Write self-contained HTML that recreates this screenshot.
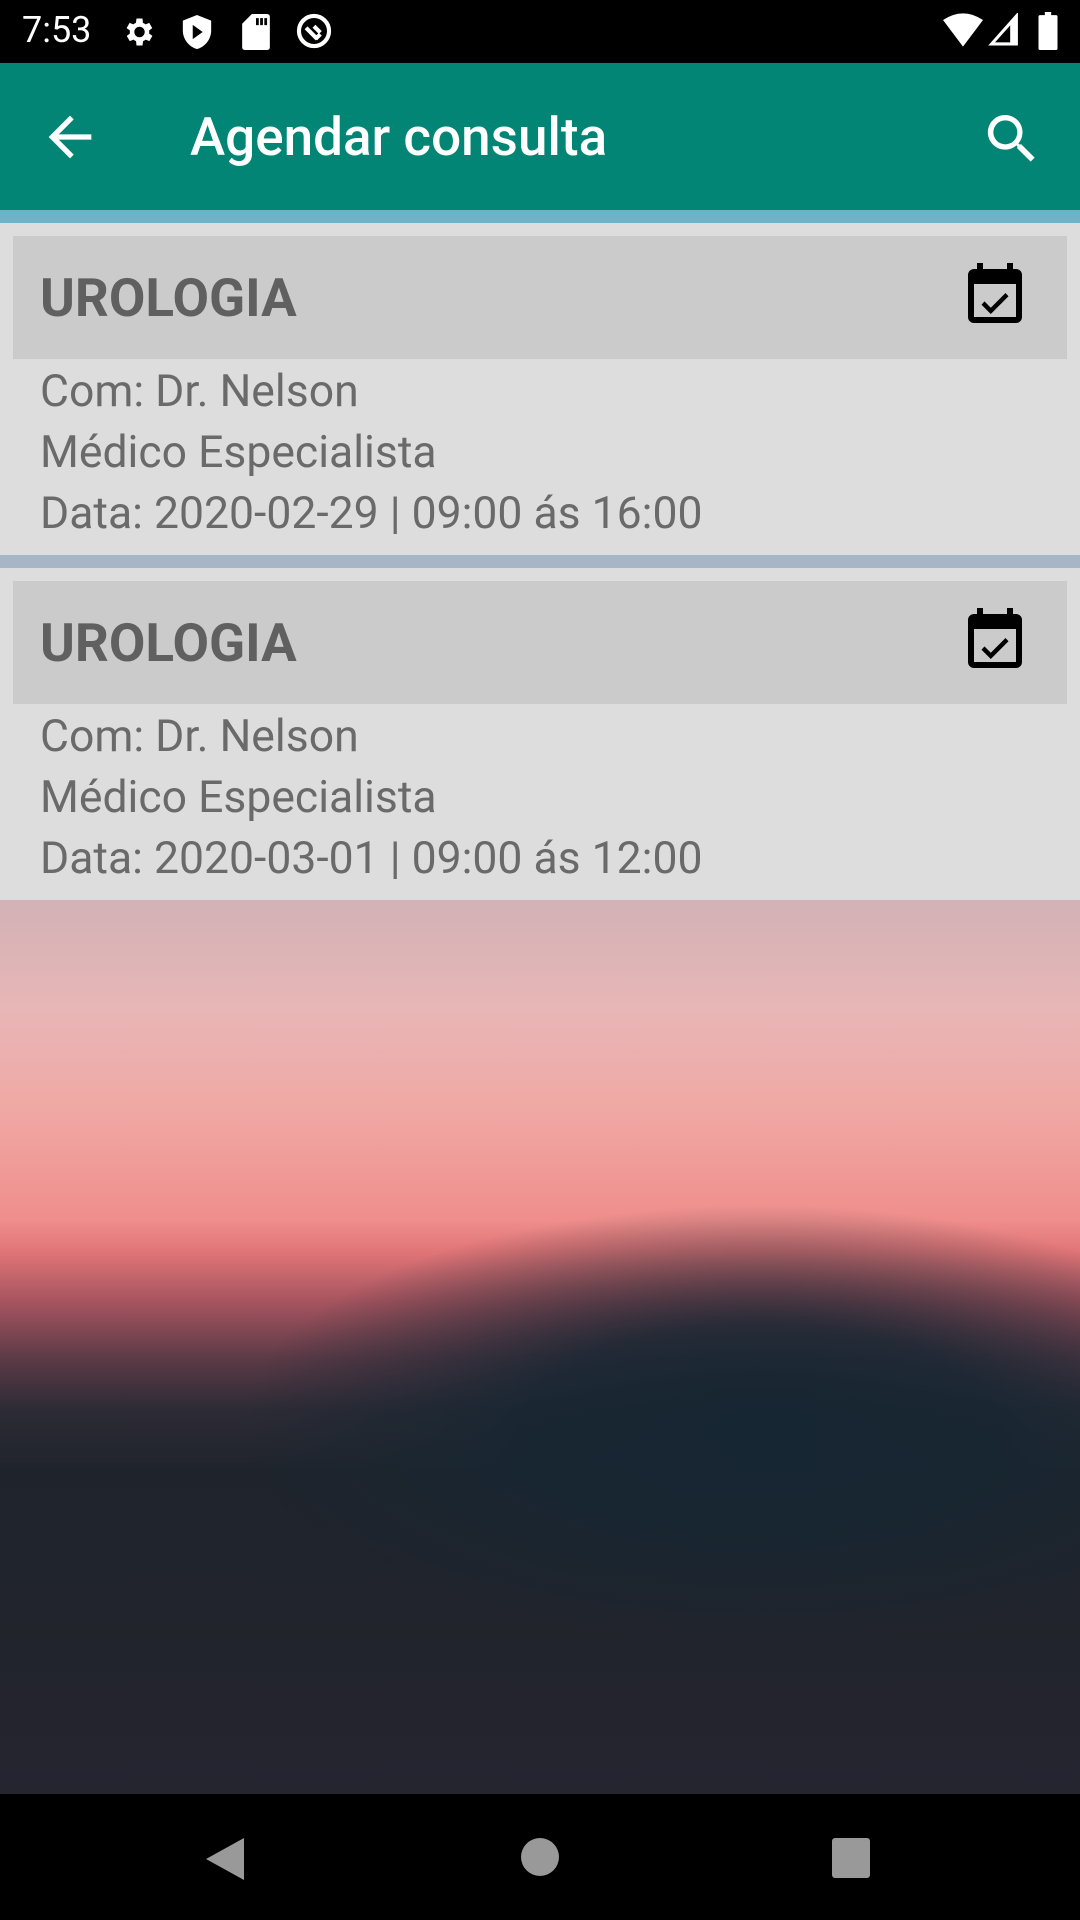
<!DOCTYPE html>
<html><head><meta charset="utf-8"><style>
*{margin:0;padding:0;box-sizing:border-box}
body{width:1080px;height:1920px;position:relative;overflow:hidden;font-family:"Roboto","Liberation Sans",sans-serif;background:#222430}
.abs{position:absolute}
#status{left:0;top:0;width:1080px;height:63px;background:#000;color:#fff}
#bar{left:0;top:63px;width:1080px;height:147px;background:#038575}
#bg{left:0;top:210px;width:1080px;height:1584px;
background:
radial-gradient(ellipse 520px 220px at 760px 1215px, rgba(22,38,50,1) 0%, rgba(22,38,50,0.85) 45%, rgba(22,38,50,0) 100%),
linear-gradient(180deg,#6cb3c8 0px,#a7b6c6 360px,#c8bfcb 560px,#d4b2b6 700px,#e8b6b6 800px,#f0a8a4 900px,#ef8e8c 1010px,#e27678 1040px,#a85560 1090px,#5a3a46 1150px,#2d2b35 1200px,#1f242c 1260px,#21242c 1400px,#252530 1584px);}
.card{left:0;width:1080px;background:#dddddd}
.hd{position:absolute;left:13px;width:1054px;height:123px;background:#cbcbcb}
.ttl{position:absolute;left:27px;top:31px;font-size:53px;font-weight:bold;color:#606060}
.ln{position:absolute;left:40px;font-size:44.5px;color:#6a6a6a;white-space:nowrap}
.cal{position:absolute;left:946px;top:24px}
#nav{left:0;top:1794px;width:1080px;height:126px;background:#000}
</style></head><body>
<div id="bg" class="abs"></div>
<div id="status" class="abs">
<div class="abs" style="left:22px;top:9px;font-size:36px;">7:53</div>
<svg class="abs" style="left:120px;top:14px" width="36" height="36" viewBox="0 0 24 24"><path fill="#fff" d="M19.4 13a7.5 7.5 0 000-2l2.1-1.6-2-3.5-2.5 1a7 7 0 00-1.7-1L15 3h-4l-.4 2.9a7 7 0 00-1.7 1l-2.5-1-2 3.5L6.6 11a7.5 7.5 0 000 2l-2.1 1.6 2 3.5 2.5-1a7 7 0 001.7 1L11 21h4l.4-2.9a7 7 0 001.7-1l2.5 1 2-3.5zM13 15.5a3.5 3.5 0 110-7 3.5 3.5 0 010 7z"/></svg>
<svg class="abs" style="left:180px;top:13px" width="34" height="38" viewBox="0 0 24 26"><path fill="#fff" d="M12 1L2 5v7c0 6 4.3 11.5 10 13 5.7-1.5 10-7 10-13V5z"/><path fill="#000" d="M9 8l7 5-7 5z"/></svg>
<svg class="abs" style="left:242px;top:14px" width="28" height="36" viewBox="0 0 20 26"><path fill="#fff" d="M7 0h11a2 2 0 012 2v22a2 2 0 01-2 2H2a2 2 0 01-2-2V7z"/><path fill="#000" d="M10 3h2v5h-2zM13 3h2v5h-2zM16 3h2v5h-2z"/></svg>
<svg class="abs" style="left:295px;top:12px" width="38" height="38" viewBox="0 0 24 24"><circle cx="12" cy="12" r="9.5" fill="none" stroke="#fff" stroke-width="2.6"/><path d="M7 10l7 7M13 17l3-3M12 9l4 4" stroke="#fff" stroke-width="2.6" fill="none"/></svg>
<svg class="abs" style="left:943px;top:13px" width="40" height="34" viewBox="0 0 24 20"><path fill="#fff" d="M0 4Q12-4 24 4L12 20z"/></svg>
<svg class="abs" style="left:988px;top:13px" width="32" height="34" viewBox="0 0 20 22"><path fill="none" stroke="#fff" stroke-width="2" d="M18 2L2 20h16z"/><path fill="#fff" d="M18 2v18H14V6z"/></svg>
<svg class="abs" style="left:1038px;top:12px" width="20" height="38" viewBox="0 0 12 24"><path fill="#fff" d="M4 0h4v2h3a1 1 0 011 1v20a1 1 0 01-1 1H1a1 1 0 01-1-1V3a1 1 0 011-1h3z"/></svg>
</div>
<div id="bar" class="abs">
<svg class="abs" style="left:38px;top:42px" width="64" height="64" viewBox="0 0 24 24"><path fill="#fff" d="M20 11H7.8l5.6-5.6L12 4l-8 8 8 8 1.4-1.4L7.8 13H20z"/></svg>
<div class="abs" style="left:190px;top:43px;font-size:53px;font-weight:500;color:#fff;">Agendar consulta</div>
<svg class="abs" style="left:980px;top:44px" width="64" height="64" viewBox="0 0 24 24"><path fill="#fff" d="M15.5 14h-.8l-.3-.3A6.5 6.5 0 109.5 16a6.5 6.5 0 004.2-1.6l.3.3v.8l5 5 1.5-1.5zm-6 0a4.5 4.5 0 110-9 4.5 4.5 0 010 9z"/></svg>
</div>

<div class="abs card" style="top:223px;height:332px">
<div class="hd" style="top:13px"><div class="ttl">UROLOGIA</div>
<svg class="cal" width="72" height="72" viewBox="0 0 24 24"><path fill="#000" d="M16.5 12.1l-1-1.1-4.9 4.9-2.1-2.1-1 1.1 3.1 3.1zM19 3h-1V1h-2v2H8V1H6v2H5a2 2 0 00-2 2v14a2 2 0 002 2h14a2 2 0 002-2V5a2 2 0 00-2-2zm0 16H5V8h14z"/></svg></div>
<div class="ln" style="top:142px">Com: Dr. Nelson</div>
<div class="ln" style="top:203px">Médico Especialista</div>
<div class="ln" style="top:264px">Data: 2020-02-29 | 09:00 ás 16:00</div>
</div>

<div class="abs card" style="top:568px;height:332px">
<div class="hd" style="top:13px"><div class="ttl">UROLOGIA</div>
<svg class="cal" width="72" height="72" viewBox="0 0 24 24"><path fill="#000" d="M16.5 12.1l-1-1.1-4.9 4.9-2.1-2.1-1 1.1 3.1 3.1zM19 3h-1V1h-2v2H8V1H6v2H5a2 2 0 00-2 2v14a2 2 0 002 2h14a2 2 0 002-2V5a2 2 0 00-2-2zm0 16H5V8h14z"/></svg></div>
<div class="ln" style="top:142px">Com: Dr. Nelson</div>
<div class="ln" style="top:203px">Médico Especialista</div>
<div class="ln" style="top:264px">Data: 2020-03-01 | 09:00 ás 12:00</div>
</div>

<div id="nav" class="abs">
<svg style="position:fixed;left:204px;top:1836px" width="42" height="46" viewBox="0 0 42 46"><path fill="#999" d="M40 2v42L2 23z"/></svg>
<div style="position:fixed;left:521px;top:1838px;width:38px;height:38px;border-radius:50%;background:#999"></div>
<div style="position:fixed;left:832px;top:1838px;width:38px;height:40px;border-radius:3px;background:#999"></div>
</div>
</body></html>
